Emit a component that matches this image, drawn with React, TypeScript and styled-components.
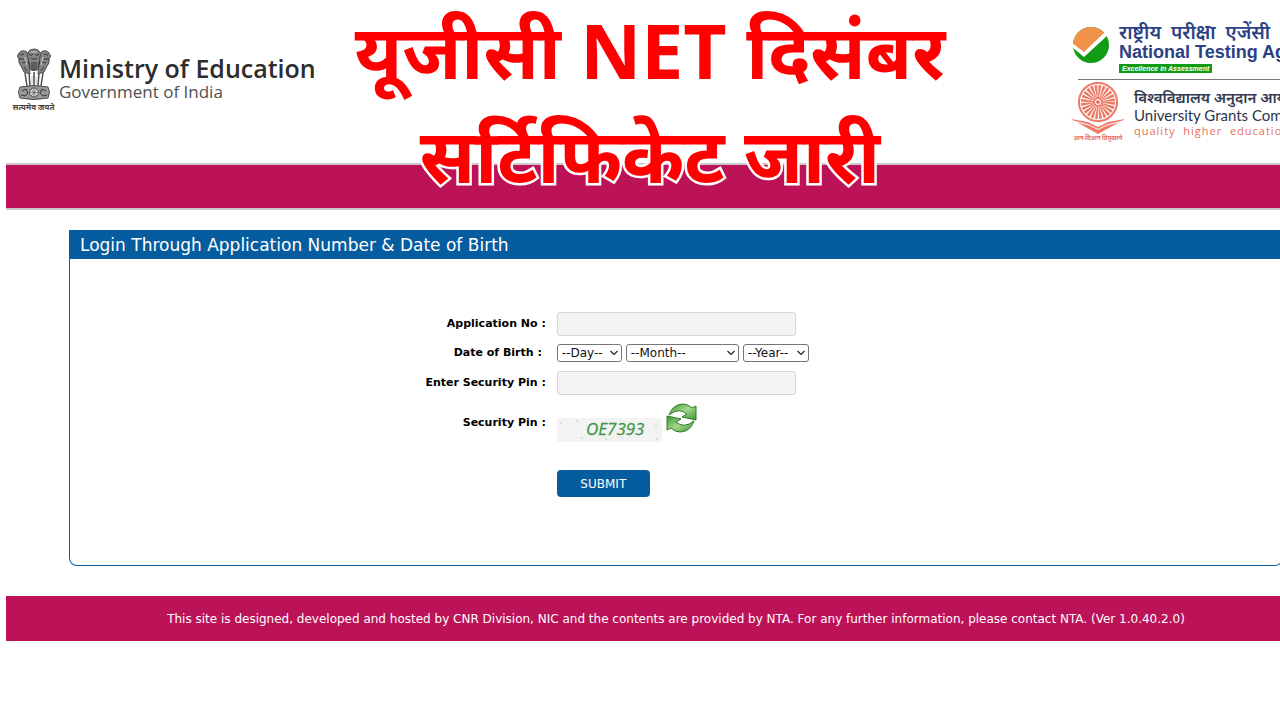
import React from 'react';
import styled, { createGlobalStyle } from 'styled-components';

const crimson = '#bb1258';
const blue = '#055c9f';
const verdana = "Verdana, 'DejaVu Sans', sans-serif";
const humanist = "'Open Sans', 'Noto Sans', 'Noto Sans Devanagari', sans-serif";

const GlobalStyle = createGlobalStyle`
  * { box-sizing: border-box; }
  html, body { margin: 0; background: #fff; }
  body { overflow-x: hidden; font-family: ${verdana}; color: #000; }
`;

const Viewport = styled.div`
  position: relative;
  overflow: hidden;
  min-height: 100vh;
`;

const Page = styled.div`
  margin: 0 -66px 0 6px;
`;

const Header = styled.header`
  display: flex;
  justify-content: space-between;
  align-items: flex-start;
  height: 163px;
`;

const Ministry = styled.div`
  display: flex;
  padding: 48px 0 0 5px;
  gap: 3px;
`;

const EmblemBox = styled.div`
  display: flex;
  flex-direction: column;
  align-items: center;
  width: 45px;
`;

const EmblemCaption = styled.span`
  font: 700 8px/14px ${humanist};
  color: #444;
  white-space: nowrap;
`;

const MinistryText = styled.div`
  padding-top: 6px;
  font-family: ${humanist};
`;

const MinistryName = styled.div`
  font-size: 25px;
  line-height: 28px;
  font-weight: 600;
  color: #2d2d2d;
  white-space: nowrap;
`;

const MinistrySub = styled.div`
  font-size: 17px;
  line-height: 20px;
  color: #505050;
`;

const Agencies = styled.div`
  width: 275px;
  padding-top: 22px;
  white-space: pre;
`;

const Agency = styled.div<{ $ruled?: boolean }>`
  display: flex;
  gap: 9px;
  margin-left: ${p => (p.$ruled ? 0 : 1)}px;
  padding-top: ${p => (p.$ruled ? 2 : 0)}px;
`;

const Rule = styled.hr`
  margin: 6px 0 0 7px;
  border: 0;
  border-top: 1px solid #777;
`;

const AgencyText = styled.div`
  display: flex;
  flex-direction: column;
  align-items: flex-start;
`;

const NtaHindi = styled.div`
  font: 600 19px/20px ${humanist};
  color: #2b4184;
`;

const NtaName = styled.div`
  font: 700 18px/20px 'Liberation Sans', Arial, sans-serif;
  color: #2b4184;
`;

const NtaMotto = styled.div`
  margin-top: 2px;
  padding: 0 3px;
  background: #119c14;
  color: #fff;
  font: italic 700 7px/9px 'Liberation Sans', Arial, sans-serif;
`;

const UgcHindi = styled.div`
  margin-top: 6px;
  font: 600 15px/18px ${humanist};
  color: #343a50;
`;

const UgcName = styled.div`
  font: 400 15px/18px Lato, sans-serif;
  color: #2e344c;
`;

const UgcMotto = styled.div`
  font: 400 11px/14px ${humanist};
  letter-spacing: 1px;
  color: #e8705c;
`;

const UgcMark = styled.div`
  display: flex;
  flex-direction: column;
  align-items: center;
  width: 54px;
`;

const UgcCaption = styled.span`
  font: 700 6px/8px ${humanist};
  color: #e8705c;
`;

const Band = styled.div`
  height: 47px;
  background: ${crimson};
  border: solid #cfc6ca;
  border-width: 2px 0;
`;

const Main = styled.main`
  padding: 20px 63px 30px;
`;

const PanelTitle = styled.h1`
  margin: 0;
  padding: 1px 11px 0;
  background: ${blue};
  color: #fff;
  font-size: 17px;
  font-weight: 400;
  line-height: 28px;
`;

const Form = styled.form`
  display: flex;
  flex-direction: column;
  padding: 53px 0 68px;
  border: 1px solid ${blue};
  border-top: 0;
  border-radius: 0 0 8px 8px;
`;

const Row = styled.div<{ $gap?: number }>`
  display: grid;
  grid-template-columns: 2fr 3fr;
  align-items: center;
  margin-bottom: ${p => p.$gap ?? 0}px;
`;

const Label = styled.label<{ $inset?: boolean }>`
  padding-right: ${p => (p.$inset ? 13 : 9)}px;
  text-align: right;
  font-size: 11px;
  line-height: 16px;
  font-weight: 700;
`;

const Field = styled.div`
  grid-column: 2;
  display: flex;
  gap: 4px;
  padding-left: 2px;
`;

const TextInput = styled.input`
  width: 239px;
  height: 24px;
  border: 1px solid #d6d6d6;
  border-radius: 3px;
  background: #f4f4f4;
  padding: 0 6px;
  font: 12px ${verdana};
`;

const SelectBox = styled.div<{ $width: number }>`
  position: relative;
  width: ${p => p.$width}px;
  height: 18px;

  svg {
    position: absolute;
    right: 4px;
    top: 6px;
    pointer-events: none;
  }
`;

const Select = styled.select`
  appearance: none;
  display: block;
  width: 100%;
  height: 18px;
  padding: 0 4px;
  border: 1px solid #767676;
  border-radius: 3px;
  background: #fff;
  color: #111;
  font: 12px/16px ${verdana};
`;

const IconButton = styled.button`
  display: block;
  width: 32px;
  height: 32px;
  padding: 0;
  border: 0;
  background: none;
  cursor: pointer;
`;

const CaptchaField = styled(Field)`
  height: 40px;
  align-items: flex-start;

  > svg { margin-top: 15px; }
`;

const Submit = styled.button`
  width: 93px;
  height: 27px;
  border: 0;
  border-radius: 4px;
  background: ${blue};
  color: #fff;
  font: 12px ${verdana};
  cursor: pointer;
`;

const Footer = styled.footer`
  padding: 12px 0 11px;
  background: ${crimson};
  color: #fff;
  font-size: 12px;
  line-height: 22px;
  text-align: center;
`;

const Headline = styled.div`
  position: absolute;
  top: -2px;
  left: 20px;
  right: 0;
  text-align: center;
  color: #fe0000;
  font: 700 75px/104px ${humanist};
  -webkit-text-stroke: 5px #fff;
  paint-order: stroke fill;
  pointer-events: none;
`;

const Emblem = () => (
  <svg width="36" height="52" viewBox="0 0 36 52" aria-label="State emblem of India">
    <g fill="#858585" stroke="#4c4c4c" strokeWidth="1">
      <path d="M12 5Q13 1 18 1T24 5L26 10L24 20Q18 25 12 20L10 10Z" />
      <path d="M11 4Q6 1 3 5Q0 8 3 11Q2 15 5 18L8 24L14 26L13 14Z" />
      <path d="M25 4Q30 1 33 5Q36 8 33 11Q34 15 31 18L28 24L22 26L23 14Z" />
      <path d="M9 25L11 38M13 25L14 38M18 24V38M23 25L22 38M27 25L25 38" fill="none" strokeWidth="1.500" />
      <path d="M4 39Q18 36 32 39Q35 44 32 50Q18 53 4 50Q1 44 4 39Z" fill="#999" />
      <circle cx="18" cy="44.500" r="4.500" fill="#ddd" />
      <path d="M18 40V49M13.500 44.500H22.500M15 41L21 48M21 41L15 48" strokeWidth=".6" />
    </g>
    <g fill="none" stroke="#333" strokeWidth="1">
      <path d="M13 6Q15 9 17 6M19 6Q21 9 23 6M15 10Q18 13 21 10M12 13L14 20M24 13L22 20M16 14V22M18 14V23M20 14V22" />
      <path d="M4 7L8 6M3 11L8 11M6 15L10 14M32 7L28 6M33 11L28 11M30 15L26 14M8 19L11 23M28 19L25 23" />
      <path d="M6 43L10 41L12 45L9 48L5 47M30 43L26 41L24 45L27 48L31 47" />
    </g>
    <path d="M15 4H21M9 9L11 17M27 9L25 17M16 28V36M20 28V36" stroke="#ccc" strokeWidth="1" />
  </svg>
);

const NtaLogo = () => (
  <svg width="38" height="44" viewBox="0 0 38 44" aria-label="NTA">
    <defs>
      <clipPath id="disc"><circle cx="19" cy="23" r="18" /></clipPath>
    </defs>
    <g clipPath="url(#disc)">
      <rect width="38" height="44" fill="#119c14" />
      <path d="M0 0H38V8L12 33L0 23Z" fill="#f0924a" />
    </g>
    <path d="M0 21L12 30L33 10L36 13L12 35L1 26Z" fill="#fff" />
  </svg>
);

const UgcLogo = () => (
  <svg width="54" height="52" viewBox="0 0 54 52" aria-label="UGC" fill="none" stroke="#ec7a66">
    <circle cx="27" cy="20" r="19" strokeWidth="2" />
    <circle cx="27" cy="20" r="11" strokeWidth="12" strokeDasharray="1.950 .930" />
    <circle cx="27" cy="20" r="4" strokeWidth="2" fill="#fff" />
    <circle cx="27" cy="20" r="1.500" fill="#ec7a66" />
    <path d="M0 37L17 40L27 45L37 40L54 37L27 52Z" fill="#ec7a66" stroke="none" />
    <path d="M4 39.500L18 43L27 47.500L36 43L50 39.500" stroke="#fff" />
  </svg>
);

const Chevron = () => (
  <svg width="8" height="6" viewBox="0 0 8 6" fill="none" stroke="#222" strokeWidth="1.200">
    <path d="M.5 1L4 4.500L7.500 1" />
  </svg>
);

const CaptchaImage = () => (
  <svg width="105" height="24" viewBox="0 0 105 24" role="img" aria-label="Security code">
    <rect width="105" height="24" fill="#f3f3f3" />
    <g fill="#c5dccb">
      <circle cx="4" cy="5" r="1" />
      <circle cx="20" cy="3" r="1" />
      <circle cx="25" cy="20" r="1" />
      <circle cx="99" cy="8" r="1" />
      <circle cx="100" cy="21" r="1" />
      <circle cx="49" cy="21" r="1" />
    </g>
    <text x="29" y="17" fill="#3f9747" stroke="#3f9747" strokeWidth=".3" fontFamily="'Open Sans', sans-serif" fontStyle="italic" fontSize="17">OE7393</text>
  </svg>
);

const arrow = 'M3 12Q7 1 17 1Q22 1 26 5L30 3V17L16 14L21 11Q13 4 3 12Z';

const RefreshIcon = () => (
  <svg width="32" height="32" viewBox="0 0 32 32" stroke="#2b7a24" strokeWidth="1" strokeLinejoin="round">
    <defs>
      <linearGradient id="leaf" x1="0" y1="0" x2="1" y2="1">
        <stop offset="0" stopColor="#3c9433" />
        <stop offset=".5" stopColor="#a5d68c" />
        <stop offset="1" stopColor="#3c9433" />
      </linearGradient>
    </defs>
    <path d={arrow} fill="url(#leaf)" />
    <path d={arrow} transform="rotate(180 15.500 15)" fill="url(#leaf)" />
  </svg>
);

interface PickerProps {
  label: string;
  width: number;
  id?: string;
}

const Picker = ({ label, width, id }: PickerProps) => (
  <SelectBox $width={width}>
    <Select id={id} aria-label={label}>
      <option>--{label}--</option>
    </Select>
    <Chevron />
  </SelectBox>
);

export default function App() {
  return (
    <Viewport>
      <GlobalStyle />
      <Page>
        <Header>
          <Ministry>
            <EmblemBox>
              <Emblem />
              <EmblemCaption>सत्यमेव जयते</EmblemCaption>
            </EmblemBox>
            <MinistryText>
              <MinistryName>Ministry of Education</MinistryName>
              <MinistrySub>Government of India</MinistrySub>
            </MinistryText>
          </Ministry>
          <Agencies>
            <Agency>
              <NtaLogo />
              <AgencyText>
                <NtaHindi>{'राष्ट्रीय  परीक्षा  एजेंसी'}</NtaHindi>
                <NtaName>National Testing Agency</NtaName>
                <NtaMotto>Excellence in Assessment</NtaMotto>
              </AgencyText>
            </Agency>
            <Rule />
            <Agency $ruled>
              <UgcMark>
                <UgcLogo />
                <UgcCaption>ज्ञान-विज्ञान विमुक्तये</UgcCaption>
              </UgcMark>
              <AgencyText>
                <UgcHindi>विश्वविद्यालय अनुदान आयोग</UgcHindi>
                <UgcName>University Grants Commission</UgcName>
                <UgcMotto>{'quality  higher  education'}</UgcMotto>
              </AgencyText>
            </Agency>
          </Agencies>
        </Header>
        <Band />
        <Main>
          <PanelTitle>Login Through Application Number &amp; Date of Birth</PanelTitle>
          <Form onSubmit={e => e.preventDefault()}>
            <Row $gap={8}>
              <Label htmlFor="application">Application No :</Label>
              <Field><TextInput id="application" /></Field>
            </Row>
            <Row $gap={9}>
              <Label htmlFor="day" $inset>Date of Birth :</Label>
              <Field>
                <Picker id="day" label="Day" width={65} />
                <Picker label="Month" width={113} />
                <Picker label="Year" width={66} />
              </Field>
            </Row>
            <Row $gap={8}>
              <Label htmlFor="pin">Enter Security Pin :</Label>
              <Field><TextInput id="pin" /></Field>
            </Row>
            <Row $gap={27}>
              <Label as="span">Security Pin :</Label>
              <CaptchaField>
                <CaptchaImage />
                <IconButton type="button" aria-label="Refresh security pin"><RefreshIcon /></IconButton>
              </CaptchaField>
            </Row>
            <Row>
              <Field><Submit type="submit">SUBMIT</Submit></Field>
            </Row>
          </Form>
        </Main>
        <Footer>
          This site is designed, developed and hosted by CNR Division, NIC and the contents are provided by NTA. For any further information, please contact NTA. (Ver 1.0.40.2.0)
        </Footer>
      </Page>
      <Headline>
        यूजीसी NET दिसंबर
        <br />
        सर्टिफिकेट जारी
      </Headline>
    </Viewport>
  );
}
